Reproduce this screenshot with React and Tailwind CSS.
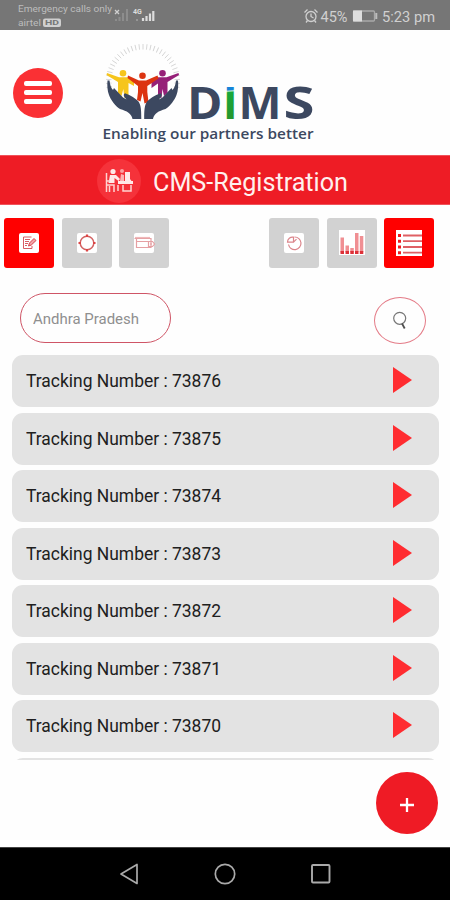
import React from "react";

const trackingNumbers = [73876, 73875, 73874, 73873, 73872, 73871, 73870];

function StatusBar() {
  return (
    <div className="flex h-[30px] shrink-0 justify-between bg-[#767676] text-[#d0d0d0]">
      <svg width="225" height="30" viewBox="0 0 225 30" fontFamily="Roboto, sans-serif" fill="#bcbcbc">
        <text x="18" y="12" fontSize="9.8" textLength="94" lengthAdjust="spacingAndGlyphs">Emergency calls only</text>
        <text x="18" y="26" fontSize="9.8" textLength="23" lengthAdjust="spacingAndGlyphs">airtel</text>
        <rect x="43" y="18.5" width="18" height="8.5" rx="2" fill="#d0d0d0" />
        <text x="45" y="25.4" fontSize="7" fontWeight="bold" fill="#767676" textLength="14" lengthAdjust="spacingAndGlyphs">HD</text>
        <path d="M115 10l4 4m0-4l-4 4" stroke="#d0d0d0" strokeWidth="1.3" />
        <path d="M116 21v-2M119.5 21v-4M123 21v-8M127 21V9" stroke="#8d8d8d" strokeWidth="2" />
        <text x="133" y="14" fontSize="7" fontWeight="bold" fill="#dddddd">4G</text>
        <path d="M137 21v-2" stroke="#969696" strokeWidth="2" />
        <path d="M143 21v-3M146.500 21v-5M150 21v-7.500M153.300 21V11" stroke="#dddddd" strokeWidth="2.2" />
      </svg>
      <svg width="150" height="30" viewBox="300 0 150 30" fontFamily="Roboto, sans-serif" fill="#d0d0d0">
        <g fill="none" stroke="#d0d0d0" strokeWidth="1.300">
          <circle cx="311" cy="16.500" r="5" />
          <path d="M304.500 12.500l3-3M314.500 9.500l3 3M311 13.500v3l2.500 1.500M307.500 20.500l-1.500 2M314.500 20.500l1.500 2" />
        </g>
        <text x="320.500" y="21.600" fontSize="14.800" textLength="27" lengthAdjust="spacingAndGlyphs">45%</text>
        <rect x="353.500" y="11" width="21" height="10" rx="1" fill="none" stroke="#a9a9a9" strokeWidth="1.300" />
        <path d="M353 10.500h9v11h-9z" fill="#dddddd" />
        <path d="M376.300 13v6" stroke="#bdbdbd" strokeWidth="2" />
        <text x="382" y="21.600" fontSize="14.800" textLength="53" lengthAdjust="spacingAndGlyphs">5:23 pm</text>
      </svg>
    </div>
  );
}

function Logo() {
  const rays = Array.from({ length: 33 }, (_, i) => -190 + i * (200 / 32));
  return (
    <svg width="225" height="112" viewBox="96 38 225 112" fill="none" aria-label="DiMS">
      <defs>
        <linearGradient id="stem" x1="227" y1="86" x2="230" y2="119" gradientUnits="userSpaceOnUse">
          <stop offset="0" stopColor="#1684d8" />
          <stop offset="0.120" stopColor="#1684d8" />
          <stop offset="0.160" stopColor="#bfe6ce" />
          <stop offset="0.200" stopColor="#19a83b" />
          <stop offset="1" stopColor="#27962c" />
        </linearGradient>
      </defs>
      <g stroke="#d4d4d4" strokeWidth="0.900">
        {rays.map((a) => <path key={a} d="M31.500 0H37" transform={`translate(143 81) rotate(${a})`} />)}
      </g>
      <g fill="#f6c51c">
        <circle cx="123" cy="73.300" r="3.300" />
        <path d="M107 73L119 77.300H127.500L134 79.500V86L128.500 83V97L124.500 98L123.300 89L121.500 96L118 93V82L106.500 75Z" />
      </g>
      <g fill="#962078">
        <circle cx="162.500" cy="73.300" r="3.300" />
        <path d="M178.500 73L166.500 77.300H158.500L151.500 79.500V88L158 83.500V97L161.500 98L162.500 89L164 96L167.500 93V82L179 75Z" />
      </g>
      <g fill="#dc3411">
        <circle cx="142.500" cy="75.800" r="3.300" />
        <path d="M128 75.500L139 80.500H146L157.500 75.500L158.500 78.500L147.300 86V92L148.500 102L144.500 103.500L142.500 93L140.500 101.500L137 100L138 92V86L127.500 78Z" />
      </g>
      <g id="hands" fill="#3c4860">
        <path d="M107.500 80.500L109.500 80.500C110 85 111 88 113 90L114 88L123 97.500L126.500 99.500C123.500 96.500 123 94.500 125 93.300C131 95.500 135.500 98.500 138.500 101.500C141 105 141.300 110 141.300 119H132.500C131.500 113.500 127 111 120 109C115 106 111 100 109 95C107.400 91 107 85 107.500 80.500Z" />
        <path d="M178 80.500L176 80.500C175.500 85 174.500 88 172.500 90L171.500 88L162.500 97.500L159 99.500C162 96.500 162.500 94.500 160.500 93.300C154.500 95.500 150 98.500 147 101.500C144.500 105 144.200 110 144.200 119H153C154 113.500 158.500 111 165.500 109C170.500 106 174.500 100 176.500 95C178.100 91 178.500 85 178 80.500Z" />
      </g>
      <g fontFamily="'Open Sans', sans-serif" fontWeight="700" fill="#3c4860">
        <text x="187" y="118.600" fontSize="45.500" textLength="35.500" lengthAdjust="spacingAndGlyphs">D</text>
        <text x="222.700" y="118.600" fontSize="45.500" textLength="15" lengthAdjust="spacingAndGlyphs" fill="url(#stem)">I</text>
        <text x="238.500" y="118.600" fontSize="45.500" textLength="43" lengthAdjust="spacingAndGlyphs">M</text>
        <text x="283.500" y="118.600" fontSize="45.500" textLength="31" lengthAdjust="spacingAndGlyphs">S</text>
        <text x="102.500" y="138.600" fontSize="14.800" fontWeight="600" textLength="211" lengthAdjust="spacingAndGlyphs">Enabling our partners better</text>
      </g>
    </svg>
  );
}

function Header() {
  return (
    <header className="flex h-[125px] shrink-0 items-center pl-[13px]">
      <button className="flex size-[50px] flex-col items-center justify-center gap-[3.5px] rounded-full bg-[#fa3034]" aria-label="Menu">
        <span className="h-[5.3px] w-7 rounded-xs bg-white" />
        <span className="h-[5.3px] w-7 rounded-xs bg-white" />
        <span className="h-[5.3px] w-7 rounded-xs bg-white" />
      </button>
      <div className="mt-[3px] ml-[33px]"><Logo /></div>
    </header>
  );
}

function TitleBar() {
  return (
    <div className="flex h-[50px] shrink-0 items-center border-y border-[#f0525a] bg-[#ee1c25] pl-[97px]">
      <svg width="44" height="44" viewBox="0 0 44 44" fill="none" className="mt-[2px]">
        <circle cx="22" cy="22" r="22" fill="#f5323a" />
        <g fill="#ffe9e8">
          <circle cx="16" cy="12.500" r="2.600" />
          <path d="M13 16h6l4 4-1.500 2-4-3v5h-6z" />
          <circle cx="25" cy="12" r="2" opacity="0.600" />
          <path d="M28 13h5v7l3 4h-8zM21 22h15v3H21z" />
          <path d="M24 15l3 1v6h-4z" opacity="0.700" />
        </g>
        <path d="M9.500 14v19M9 26h8v7M12.500 27v6M21 26v6M26 26v6h8v-6M9 22h4" stroke="#ffd3d1" strokeWidth="1.500" />
      </svg>
      <h1 className="ml-[12px] text-[25.500px] leading-none text-[#fff0ee]">
        <svg width="198" height="34" viewBox="0 0 198 34" fill="currentColor" className="block">
          <text x="0" y="27.500" textLength="195" lengthAdjust="spacingAndGlyphs">CMS-Registration</text>
        </svg>
      </h1>
    </div>
  );
}

function Tile({ active, children }) {
  return (
    <button className={`flex size-[50px] items-center justify-center rounded-[3px] ${active ? "bg-[#ff0000]" : "bg-[#d2d2d2]"}`}>
      {children}
    </button>
  );
}

function IconSheet({ children }) {
  return (
    <svg width="26" height="26" viewBox="0 0 26 26" fill="none">
      <rect x="3" y="3" width="20" height="20" rx="2" fill="#fff" />
      {children}
    </svg>
  );
}

function Toolbar() {
  return (
    <div className="flex shrink-0 justify-between pt-[13px] pr-[16px] pl-[4px]">
      <div className="flex gap-[7.5px]">
        <Tile active>
          <IconSheet>
            <path d="M15.500 7H7.500v11.500H16V16M9 9.500h5M9 11.500h4M9 13.500h3M9 15.500h2" stroke="#d85b62" strokeWidth="1" />
            <path d="M12.500 16l1-3 4.500-4.500 2 2-4.700 4.500z" fill="#f3a5a8" stroke="#d6404a" strokeWidth="1" />
          </IconSheet>
        </Tile>
        <Tile>
          <IconSheet>
            <circle cx="13" cy="13" r="6.800" stroke="#d36464" strokeWidth="1.500" />
            <path d="M13 4.500v2.500M13 19v2.500M4.500 13h2.500M19 13h2.500" stroke="#dc4545" strokeWidth="2.200" />
          </IconSheet>
        </Tile>
        <Tile>
          <IconSheet>
            <path d="M3.500 8.500H20v9H5.500v-9M5.500 11.500H20M17.500 11.500h4l2 2.500-2 2.500h-4zM19 14h2" stroke="#e5a0a3" strokeWidth="1.200" />
            <path d="M4 7.500h15" stroke="#efb9ba" strokeWidth="1.200" />
          </IconSheet>
        </Tile>
      </div>
      <div className="flex gap-[7.500px]">
        <Tile>
          <IconSheet>
            <path d="M13.500 7A6.300 6.300 0 1 1 7.500 14.500M6.500 12.200a5 5 0 0 1 6-5v5zM12.500 12.200l3-3" stroke="#db858b" strokeWidth="1.200" />
          </IconSheet>
        </Tile>
        <Tile>
          <svg width="26" height="26" viewBox="0 0 26 26">
            <path fill="#fff" d="M0 0h26v25H0z" />
            <path d="M1.500 7.500h3.500v15H1.500zM6.500 15.500h3.500V22H6.500zM11.300 18h3.500v4h-3.500zM16 3h3.500v19H16zM20.800 6h3.500v16h-3.500z" fill="#f08f93" />
            <path d="M1.500 21h3.500v3H1.500zM6.500 21h3.500v3H6.500zM11.300 21h3.500v3h-3.500zM16 21h3.500v3H16zM20.800 21h3.500v3h-3.500z" fill="#dd3038" />
          </svg>
        </Tile>
        <Tile active>
          <svg width="26" height="26" viewBox="0 0 26 26">
            <path fill="#fff" d="M0 0h26v26H0z" />
            <path d="M7 5.500h19M7 11.200h19M7 17h19M7 22.700h19" stroke="#df6064" strokeWidth="1.800" />
            <path d="M2 5.500h3M2 11.200h3M2 17h3M2 22.700h3" stroke="#f01c20" strokeWidth="3" />
          </svg>
        </Tile>
      </div>
    </div>
  );
}

function SearchRow() {
  return (
    <div className="mt-[25px] flex h-[51px] shrink-0 items-start justify-between pr-[24px] pl-[20px]">
      <div className="flex h-[50px] w-[151px] items-center rounded-full border border-[#cf5566] pl-[12px] text-[#8f8f8f]">
        <svg width="112" height="24" viewBox="0 0 112 24" fill="currentColor">
          <text x="0" y="17.700" fontSize="15" textLength="106" lengthAdjust="spacingAndGlyphs">Andhra Pradesh</text>
        </svg>
      </div>
      <button className="mt-[3.500px] flex h-[47px] w-[52px] items-center justify-center rounded-[50%] border border-[#e47b87]" aria-label="Search">
        <svg width="20" height="20" viewBox="0 0 20 20" fill="none" stroke="#777" className="-ml-px">
          <circle cx="9.700" cy="8.300" r="6" strokeWidth="1.200" />
          <path d="M12 13.500l2.700 5" stroke="#4e4e4e" strokeWidth="1.800" />
        </svg>
      </button>
    </div>
  );
}

function TrackingRow({ number }) {
  return (
    <li className="flex h-[52px] shrink-0 items-center justify-between rounded-[11px] bg-[#e3e3e3] pr-[27px] pl-[14px] text-[#202020]">
      <svg width="200" height="30" viewBox="0 0 200 30" fill="currentColor">
        <text x="0" y="21" fontSize="17.500" textLength="195" lengthAdjust="spacingAndGlyphs">{`Tracking Number : ${number}`}</text>
      </svg>
      <svg width="19" height="26" viewBox="0 0 19 26" className="mb-[2px]">
        <path d="M0 0L19 13L0 26Z" fill="#ff2c30" />
      </svg>
    </li>
  );
}

function NavBar() {
  return (
    <nav className="flex h-[53px] shrink-0 items-center justify-between border-t border-[#444] bg-black px-[118px]">
      <svg width="22" height="22" viewBox="0 0 22 22" fill="none" stroke="#aaa" strokeWidth="1.700" strokeLinejoin="round">
        <path d="M3 11L19 1.500V20.500Z" />
      </svg>
      <svg width="22" height="22" viewBox="0 0 22 22" fill="none" stroke="#aaa" strokeWidth="1.700">
        <circle cx="11" cy="11" r="9.700" />
      </svg>
      <svg width="22" height="22" viewBox="0 0 22 22" fill="none" stroke="#aaa" strokeWidth="1.900">
        <rect x="2" y="2" width="17.500" height="17.500" rx="1" />
      </svg>
    </nav>
  );
}

export default function App() {
  return (
    <div className="flex h-[900px] w-[450px] flex-col overflow-hidden bg-[#fefefe] font-[Roboto,sans-serif]">
      <StatusBar />
      <Header />
      <TitleBar />
      <Toolbar />
      <SearchRow />
      <ul className="mt-[11px] flex h-[405px] shrink-0 flex-col gap-[5.500px] overflow-hidden pr-[11px] pl-[12px]">
        {trackingNumbers.map((number) => <TrackingRow key={number} number={number} />)}
        <li className="h-[52px] shrink-0 rounded-[11px] bg-[#e3e3e3]" />
      </ul>
      <div className="flex flex-1 items-start justify-end pt-[12px] pr-[12px]">
        <button className="flex size-[62px] items-center justify-center rounded-full bg-[#ef1b25]" aria-label="Add">
          <svg width="16" height="16" viewBox="0 0 16 16" className="mt-[3px]">
            <path d="M8 1v14M1 8h14" stroke="#fff" strokeWidth="2.300" />
          </svg>
        </button>
      </div>
      <NavBar />
    </div>
  );
}
